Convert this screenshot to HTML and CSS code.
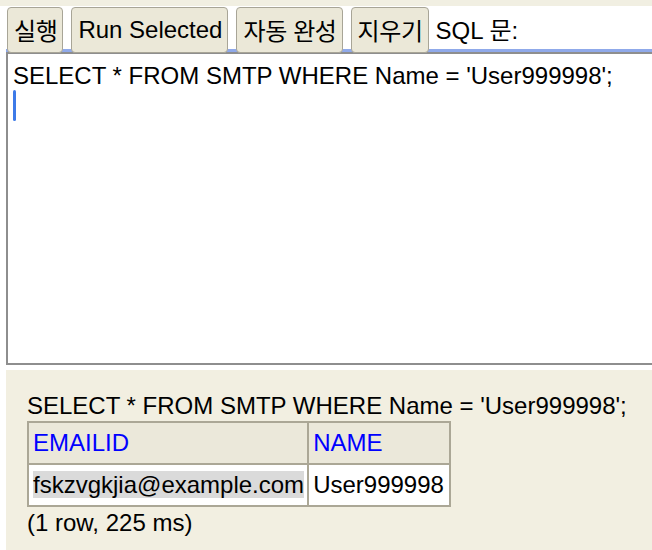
FILE: index.html
```html
<!DOCTYPE html>
<html lang="ko">
<head>
<meta charset="utf-8">
<title>H2 Console</title>
<link rel="stylesheet" href="styles.css">
</head>
<body>
<div class="strip"></div>
<form class="toolbar">
  <button type="button" class="btn ko">실행</button>
  <button type="button" class="btn">Run Selected</button>
  <button type="button" class="btn ko">자동 완성</button>
  <button type="button" class="btn ko">지우기</button>
  <span class="label">SQL <span class="ko">문</span>:</span>
</form>
<div class="editor">
  <div class="area">
    <div class="line">SELECT * FROM SMTP WHERE Name = 'User999998';</div>
    <div class="caret"></div>
  </div>
</div>
<div class="result">
  <div class="sql">SELECT * FROM SMTP WHERE Name = 'User999998';</div>
  <table class="grid">
    <tr><th>EMAILID</th><th class="last">NAME</th></tr>
    <tr><td><span class="sel">fskzvgkjia@example.com</span></td><td class="last">User999998</td></tr>
  </table>
  <div class="info">(1 row, 225 ms)</div>
</div>
</body>
</html>
```
FILE: styles.css
```css
html, body {
  margin: 0;
  padding: 0;
  background: #ffffff;
  overflow: hidden;
  height: 550px;
}
body {
  font-family: "Liberation Sans", "Noto Sans CJK KR", sans-serif;
  font-size: 24px;
  color: #000;
}
.ko {
  font-family: "Noto Sans CJK KR", "Liberation Sans", sans-serif;
}
.strip {
  height: 6px;
  background: #f1efe2;
}
.toolbar {
  display: flex;
  align-items: flex-start;
  gap: 8px;
  height: 42px;
  margin: 0;
  padding: 1px 0 0 7px;
  position: relative;
  z-index: 1;
}
.btn {
  font: inherit;
  font-size: 24px;
  line-height: 28px;
  height: 46px;
  padding: 7px 5px 8px 6px;
  background: #ebe8d8;
  border: 1.5px solid #a8a597;
  border-radius: 4px;
  color: #000;
  white-space: nowrap;
}
.btn.ko {
  font-family: "Noto Sans CJK KR", "Liberation Sans", sans-serif;
  letter-spacing: -0.4px;
  padding-left: 6px;
  padding-right: 5px;
}
.label {
  line-height: 28px;
  padding-top: 8px;
  margin-left: -1px;
  white-space: nowrap;
}
.editor {
  margin-left: 6px;
  border-top: 3px solid #8fa9ea;
}
.area {
  height: 309px;
  border: 2px solid #8e8e8e;
  border-right: none;
  padding: 0 0 0 5px;
  box-sizing: content-box;
}
.line {
  line-height: 28px;
  padding-top: 8px;
  white-space: nowrap;
}
.caret {
  width: 3px;
  height: 31px;
  background: #3d7ae8;
  border-radius: 1.5px;
}
.result {
  margin: 5px 0 0 6px;
  height: 180px;
  background: #f2efe1;
  padding: 22px 0 0 21px;
  box-sizing: border-box;
}
.sql {
  line-height: 28px;
  white-space: nowrap;
}
.grid {
  border-collapse: collapse;
  margin-top: 1px;
}
.grid th, .grid td {
  border: 2px solid #aba796;
  line-height: 28px;
  padding: 6px 3px 6px 4px;
  text-align: left;
  font-weight: normal;
  white-space: nowrap;
}
.grid .last {
  padding-right: 5px;
}
.grid th {
  background: #ebe8da;
  color: #0000ff;
}
.grid td {
  background: #ffffff;
}
.sel {
  background: #dadada;
}
.info {
  line-height: 28px;
  margin-top: 2px;
}
```
